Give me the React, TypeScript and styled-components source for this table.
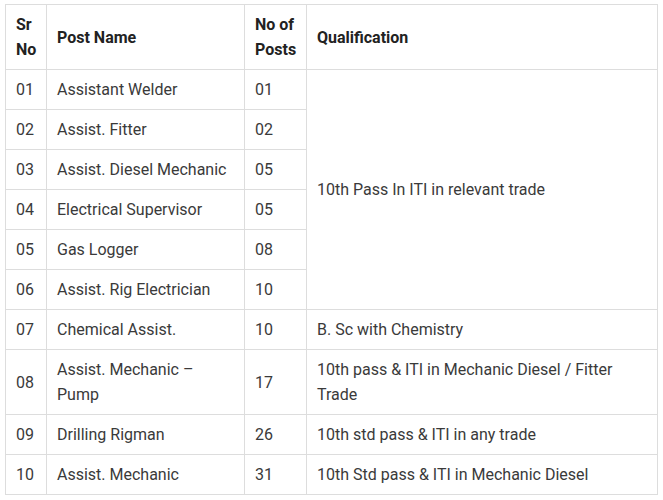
import React from "react";
import styled, { createGlobalStyle } from "styled-components";

const Global = createGlobalStyle`
  html, body { margin: 0; padding: 0; background: #fff; }
  body { padding: 4px 0 0 5px; font-family: Roboto, "Liberation Sans", Arial, sans-serif; }
`;

const Table = styled.table`
  border-collapse: collapse;
  table-layout: fixed;
  width: 652px;
  font-size: 16px;
  line-height: 25px;
  color: #3a3a3a;
  border: 1px solid #dddddd;
`;

const Th = styled.th`
  text-align: left;
  font-weight: 700;
  color: #222;
  padding: 7px 10px;
  border: 1px solid #dddddd;
  vertical-align: middle;
`;

const Td = styled.td`
  padding: 7px 10px;
  border: 1px solid #dddddd;
  vertical-align: middle;
`;

type Row = { sr: string; name: string; posts: string; qual?: string; span?: number };

const rows: Row[] = [
  { sr: "01", name: "Assistant Welder", posts: "01", qual: "10th Pass In ITI in relevant trade", span: 6 },
  { sr: "02", name: "Assist. Fitter", posts: "02" },
  { sr: "03", name: "Assist. Diesel Mechanic", posts: "05" },
  { sr: "04", name: "Electrical Supervisor", posts: "05" },
  { sr: "05", name: "Gas Logger", posts: "08" },
  { sr: "06", name: "Assist. Rig Electrician", posts: "10" },
  { sr: "07", name: "Chemical Assist.", posts: "10", qual: "B. Sc with Chemistry" },
  { sr: "08", name: "Assist. Mechanic – Pump", posts: "17", qual: "10th pass & ITI in Mechanic Diesel / Fitter Trade" },
  { sr: "09", name: "Drilling Rigman", posts: "26", qual: "10th std pass & ITI in any trade" },
  { sr: "10", name: "Assist. Mechanic", posts: "31", qual: "10th Std pass & ITI in Mechanic Diesel" },
];

export default function App() {
  return (
    <>
      <Global />
      <Table>
        <colgroup>
          <col style={{ width: 41 }} />
          <col style={{ width: 198 }} />
          <col style={{ width: 62 }} />
          <col style={{ width: 351 }} />
        </colgroup>
        <thead>
          <tr>
            <Th>Sr No</Th>
            <Th>Post Name</Th>
            <Th>No of Posts</Th>
            <Th>Qualification</Th>
          </tr>
        </thead>
        <tbody>
          {rows.map((r) => (
            <tr key={r.sr}>
              <Td>{r.sr}</Td>
              <Td>{r.name}</Td>
              <Td>{r.posts}</Td>
              {r.qual !== undefined && <Td rowSpan={r.span ?? 1}>{r.qual}</Td>}
            </tr>
          ))}
        </tbody>
      </Table>
    </>
  );
}
